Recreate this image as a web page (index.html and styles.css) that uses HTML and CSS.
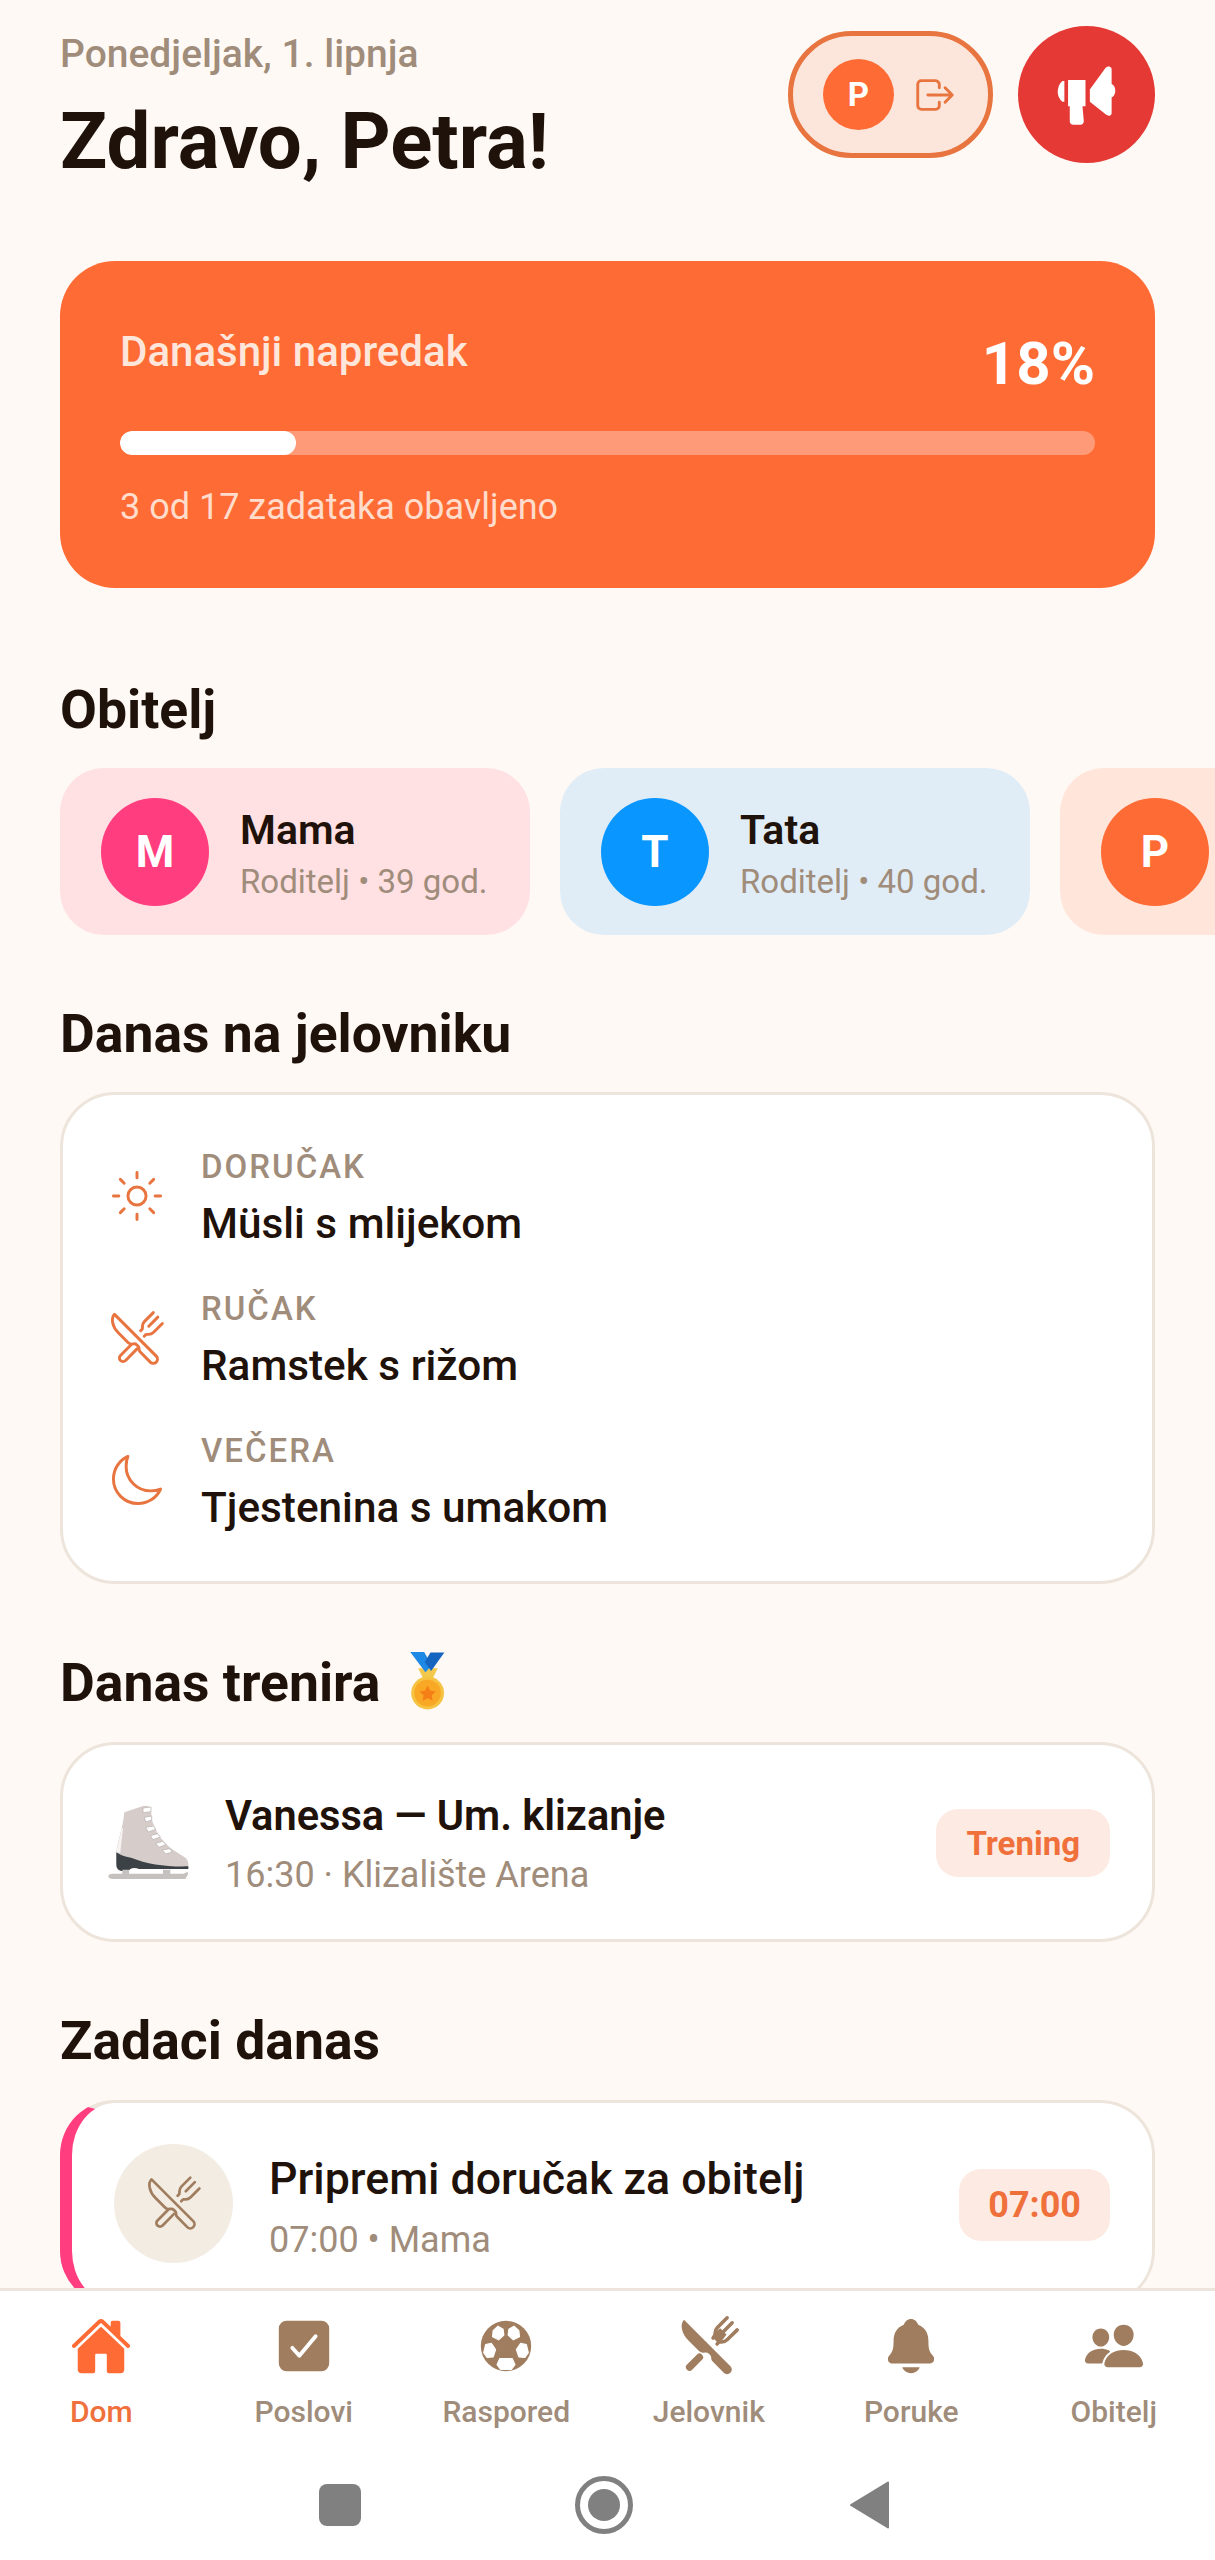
FILE: index.html
```html
<!DOCTYPE html>
<html lang="hr">
<head>
    <meta charset="UTF-8">
    <meta name="viewport" content="width=device-width, initial-scale=1.0">
    <title>Obitelj - Dom</title>
    <link rel="stylesheet" href="styles.css">
</head>
<body>

    <div class="phone">
        <div class="scroll">

            <div class="header">
                <div class="greeting">
                    <p class="date">Ponedjeljak, 1. lipnja</p>
                    <h1>Zdravo, Petra!</h1>
                </div>
                <div class="actions">
                    <div class="user-pill">
                        <span class="pill-avatar">P</span>
                        <svg class="exit-icon" viewBox="0 0 512 512"><path d="M304 336v40a40 40 0 01-40 40H104a40 40 0 01-40-40V136a40 40 0 0140-40h152c22.09 0 48 17.91 48 40v40M368 336l80-80-80-80M176 256h256"/></svg>
                    </div>
                    <div class="alert-btn">
                        <svg class="alert-icon" viewBox="880 150 200 200">
                            <path d="M914 210h-6c-9 8-14 20-14 32s5 22 14 30h6z"/>
                            <path d="M925 207h52v78h-9l4 44c0 7-4 11-10 11h-21c-7 0-11-4-11-11v-44h-5z"/>
                            <path d="M990 235l46-63c6-8 19-7 19 3v44c7 3 11 11 11 20s-4 17-11 20v46c0 9-10 11-17 5l-48-38z"/>
                        </svg>
                    </div>
                </div>
            </div>

            <div class="progress-card">
                <div class="progress-top">
                    <span class="progress-label">Današnji napredak</span>
                    <span class="progress-value">18%</span>
                </div>
                <div class="bar"><div class="bar-fill" style="width: 18%"></div></div>
                <p class="progress-note">3 od 17 zadataka obavljeno</p>
            </div>

            <h2 class="first">Obitelj</h2>
            <div class="family">
                <div class="member pink">
                    <span class="avatar">M</span>
                    <div class="member-text">
                        <p class="member-name">Mama</p>
                        <p class="member-role">Roditelj • 39 god.</p>
                    </div>
                </div>
                <div class="member blue">
                    <span class="avatar">T</span>
                    <div class="member-text">
                        <p class="member-name">Tata</p>
                        <p class="member-role">Roditelj • 40 god.</p>
                    </div>
                </div>
                <div class="member peach">
                    <span class="avatar">P</span>
                </div>
            </div>

            <h2>Danas na jelovniku</h2>
            <div class="card menu">
                <div class="meal">
                    <svg class="meal-icon" viewBox="0 0 512 512"><path d="M256 48v48M256 416v48M403.08 108.92l-33.94 33.94M142.86 369.14l-33.94 33.94M464 256h-48M96 256H48M403.08 403.08l-33.94-33.94M142.86 142.86l-33.94-33.94"/><circle cx="256" cy="256" r="80"/></svg>
                    <div>
                        <p class="meal-label">DORUČAK</p>
                        <p class="meal-name">Müsli s mlijekom</p>
                    </div>
                </div>
                <div class="meal">
                    <svg class="meal-icon" viewBox="0 0 512 512"><path d="M57.49 47.74l368.43 368.43a37.28 37.28 0 010 52.72 37.29 37.29 0 01-52.72 0l-90-91.55a32 32 0 01-9.2-22.43v-5.53a32 32 0 00-9.52-22.78l-11.62-10.73a32 32 0 00-29.8-7.44 48.53 48.53 0 01-46.56-12.63l-85.43-85.44C40.39 159.68 21.74 83.15 57.49 47.74z"/><path d="M400 32l-77.25 77.25A64 64 0 00304 154.51v14.86a16 16 0 01-4.69 11.32L288 192M320 240l11.31-11.31a16 16 0 0111.32-4.69h14.86a64 64 0 0045.26-18.75L480 128M440 72l-80 80M200 320l-89.81 89.81a32 32 0 000 45.26 32 32 0 0045.26 0L256 352"/></svg>
                    <div>
                        <p class="meal-label">RUČAK</p>
                        <p class="meal-name">Ramstek s rižom</p>
                    </div>
                </div>
                <div class="meal">
                    <svg class="meal-icon" viewBox="0 0 512 512"><path d="M160 136c0-30.62 4.51-61.61 16-88C99.57 81.27 48 159.32 48 248c0 119.29 96.71 216 216 216 88.68 0 166.73-51.57 200-128-26.39 11.49-57.38 16-88 16-119.29 0-216-96.71-216-216z"/></svg>
                    <div>
                        <p class="meal-label">VEČERA</p>
                        <p class="meal-name">Tjestenina s umakom</p>
                    </div>
                </div>
            </div>

            <h2 class="with-emoji">Danas trenira
                <svg class="medal" viewBox="1040 95 120 190">
                    <path fill="#f2c94c" d="M1072 150h62l-16 32h-30z"/>
                    <path fill="#1e88e5" d="M1047 98h44l24 42-20 22z"/>
                    <path fill="#1565c0" d="M1155 100h-44l-18 30 20 28z"/>
                    <circle fill="#f5c242" cx="1102" cy="228" r="52"/>
                    <circle fill="#f9a825" cx="1102" cy="228" r="42"/>
                    <path fill="#f57f17" d="M1102 204l8 16 18 3-13 12 3 18-16-9-16 9 3-18-13-12 18-3z"/>
                </svg>
            </h2>
            <div class="card training">
                <svg class="skate" viewBox="145 560 243 228">
                    <path fill="#d6cdcb" d="M194 585l54-18c12-4 24-1 26 10l2 22c2 28 28 74 66 100l32 20c9 6 12 14 12 24v8H212l-42-12v-30c0-30 20-74 24-124z"/>
                    <path fill="#f6f3f2" d="M186 632c-4 26-14 50-16 74h12c2-24 6-50 8-74z"/>
                    <path fill="#fff" stroke="#b5aeac" stroke-width="2" d="M250 572l24-3v14l-24 3zM254 600l22-4v12l-18 6zM258 630l24-4 6 10-22 8zM272 655l22-6 8 10-22 8zM288 678l22-6 8 10-20 8zM308 698l22-4 8 10-20 6z"/>
                    <path fill="#3c4145" d="M170 705c15 10 30 14 44 16 50 20 110 28 172 26v8H238c-10-4-18-4-26 0l-6 6h-16c-14 0-20-8-20-18z"/>
                    <path fill="#c4c1be" d="M188 757h20v12h102v-12h22v12h40l12-6 1 8-8 14H160c-8 0-14-3-14-8s5-8 12-8h30z"/>
                </svg>
                <div class="card-text training-text">
                    <p class="card-title">Vanessa — Um. klizanje</p>
                    <p class="card-sub">16:30 · Klizalište Arena</p>
                </div>
                <span class="tag">Trening</span>
            </div>

            <h2>Zadaci danas</h2>
            <div class="card task">
                <div class="task-icon">
                    <svg viewBox="0 0 512 512"><path d="M57.49 47.74l368.43 368.43a37.28 37.28 0 010 52.72 37.29 37.29 0 01-52.72 0l-90-91.55a32 32 0 01-9.2-22.43v-5.53a32 32 0 00-9.52-22.78l-11.62-10.73a32 32 0 00-29.8-7.44 48.53 48.53 0 01-46.56-12.63l-85.43-85.44C40.39 159.68 21.74 83.15 57.49 47.74z"/><path d="M400 32l-77.25 77.25A64 64 0 00304 154.51v14.86a16 16 0 01-4.69 11.32L288 192M320 240l11.31-11.31a16 16 0 0111.32-4.69h14.86a64 64 0 0045.26-18.75L480 128M440 72l-80 80M200 320l-89.81 89.81a32 32 0 000 45.26 32 32 0 0045.26 0L256 352"/></svg>
                </div>
                <div class="card-text task-text">
                    <p class="task-title">Pripremi doručak za obitelj</p>
                    <p class="card-sub task-sub">07:00 • Mama</p>
                </div>
                <span class="tag time">07:00</span>
            </div>
        </div>

        <div class="nav">
            <div class="nav-item active">
                <svg class="nav-icon" viewBox="0 0 512 512"><path d="M261.56 101.28a8 8 0 00-11.06 0L66.4 277.15a8 8 0 00-2.47 5.79L63.9 448a32 32 0 0032 32H192a16 16 0 0016-16V328a8 8 0 018-8h80a8 8 0 018 8v136a16 16 0 0016 16h96.06a32 32 0 0032-32V282.94a8 8 0 00-2.47-5.79z"/><path d="M490.91 244.15l-74.8-71.56V64a16 16 0 00-16-16h-48a16 16 0 00-16 16v32l-57.92-55.38C272.77 35.14 264.71 32 256 32c-8.68 0-16.72 3.14-22.14 8.63l-212.7 203.5c-6.22 6-7 15.87-1.34 22.37A16 16 0 0043 267.56L250.5 69.28a8 8 0 0111.06 0l207.52 198.28a16 16 0 0022.59-.44c6.14-6.36 5.63-16.86-.76-22.97z"/></svg>
                <span>Dom</span>
            </div>
            <div class="nav-item">
                <svg class="nav-icon" viewBox="0 0 512 512"><path d="M400 48H112a64.07 64.07 0 00-64 64v288a64.07 64.07 0 0064 64h288a64.07 64.07 0 0064-64V112a64.07 64.07 0 00-64-64zm-35.75 138.29l-134.4 160a16 16 0 01-12 5.71h-.27a16 16 0 01-11.89-5.3l-57.6-64a16 16 0 1123.78-21.4l45.29 50.32 122.59-145.91a16 16 0 0124.5 20.58z"/></svg>
                <span>Poslovi</span>
            </div>
            <div class="nav-item">
                <svg class="nav-icon" viewBox="0 0 512 512">
                    <circle cx="256" cy="256" r="208"/>
                    <g class="ball-patch">
                        <path d="M150 130l40-38 42 26 6 47-43 40-50-25z"/>
                        <path d="M362 130l-40-38-42 26-6 47 43 40 50-25z"/>
                        <path d="M88 245l47-10 35 50-20 60-50 5-28-40z"/>
                        <path d="M424 245l-47-10-35 50 20 60 50 5 28-40z"/>
                        <path d="M205 360h102l23 50-30 40h-88l-30-40z"/>
                    </g>
                </svg>
                <span>Raspored</span>
            </div>
            <div class="nav-item">
                <svg class="nav-icon" viewBox="10 10 492 492">
                    <path d="M57.49 47.74l368.43 368.43a37.28 37.28 0 010 52.72 37.29 37.29 0 01-52.72 0l-90-91.55a32 32 0 01-9.2-22.43v-5.53a32 32 0 00-9.52-22.78l-11.62-10.73a32 32 0 00-29.8-7.44 48.53 48.53 0 01-46.56-12.63l-85.43-85.44C40.39 159.68 21.74 83.15 57.49 47.74z"/>
                    <path d="M300 150l45-35 50 50-35 47-40 13-30-30z"/>
                    <path class="fork-line" d="M400 32l-77 77A64 64 0 00304 154v15L288 192M320 240l11-11a16 16 0 0111-5h15a64 64 0 0045-19l78-77M440 72l-90 90"/>
                    <path class="fork-handle" d="M180 345l-78 78"/>
                </svg>
                <span>Jelovnik</span>
            </div>
            <div class="nav-item">
                <svg class="nav-icon" viewBox="0 0 512 512"><path d="M440.08 341.31c-1.66-2-3.29-4-4.89-5.93-22-26.61-35.31-42.67-35.31-118 0-39-9.33-71-27.72-95-13.56-17.73-31.89-31.18-56.05-41.12a3 3 0 01-.82-.67C306.6 51.49 282.82 32 256 32s-50.59 19.49-59.28 48.56a3.13 3.13 0 01-.81.65c-56.38 23.21-83.78 67.74-83.78 136.14 0 75.36-13.29 91.42-35.31 118-1.6 1.93-3.23 3.89-4.89 5.93a35.16 35.16 0 00-4.65 37.62c6.17 13 19.32 21.07 34.33 21.07H410.5c14.94 0 28-8.06 34.19-21a35.17 35.17 0 00-4.61-37.66zM256 480a80.06 80.06 0 0070.44-42.13 4 4 0 00-3.54-5.87H189.12a4 4 0 00-3.55 5.87A80.06 80.06 0 00256 480z"/></svg>
                <span>Poruke</span>
            </div>
            <div class="nav-item">
                <svg class="nav-icon" viewBox="0 0 512 512"><path d="M336 256c-20.56 0-40.44-9.18-56-25.84-15.13-16.25-24.37-37.92-26-61-1.74-24.62 5.77-47.26 21.14-63.76S312 80 336 80c23.83 0 45.38 9.06 60.7 25.52 15.47 16.62 23 39.22 21.26 63.63-1.67 23.11-10.9 44.77-26 61C376.44 246.82 356.57 256 336 256zM467.83 432H204.18a27.71 27.71 0 01-22-10.67 30.22 30.22 0 01-5.26-25.79c8.42-33.81 29.28-61.85 60.32-81.08C264.79 297.4 299.86 288 336 288c36.85 0 71 9 98.71 26.05 31.11 19.13 52 47.33 60.38 81.55a30.27 30.27 0 01-5.32 25.78A27.68 27.68 0 01467.83 432zM147 260c-35.19 0-66.13-32.72-69-72.93-1.42-20.6 5-39.65 18-53.62 12.86-13.83 31-21.45 51-21.45s38 7.66 50.93 21.57c13.1 14.08 19.5 33.09 18 53.52-2.87 40.2-33.8 72.91-68.93 72.91zM212.66 291.45c-17.59-8.6-40.42-12.9-65.65-12.9-29.46 0-58.07 7.68-80.57 21.62-25.51 15.83-42.67 38.88-49.6 66.71a27.39 27.39 0 004.79 23.36A25.32 25.32 0 0041.72 400h111a8 8 0 007.87-6.57c.11-.63.25-1.26.41-1.88 8.48-34.06 28.35-62.84 57.71-83.82a8 8 0 00-.63-13.39c-1.57-.92-3.37-1.89-5.42-2.89z"/></svg>
                <span>Obitelj</span>
            </div>
        </div>

        <div class="sysbar">
            <span class="sys-square"></span>
            <span class="sys-home"></span>
            <svg class="sys-back" viewBox="0 0 40 48"><path d="M38 1.5v45L1 24z"/></svg>
        </div>
    </div>

</body>
</html>
```

FILE: styles.css
```css
* {
    box-sizing: border-box;
    margin: 0;
    padding: 0;
}
body {
    font-family: Roboto, "Noto Sans", sans-serif;
    background-color: #fff9f5;
    color: #1f120a;
}
.phone {
    width: 1215px;
    height: 2560px;
    display: flex;
    flex-direction: column;
    overflow: hidden;
}
.scroll {
    flex: 1;
    min-height: 0;
    overflow: hidden;
    padding: 26px 60px 0;
}

/* header */
.header {
    display: flex;
    justify-content: space-between;
    align-items: flex-start;
    height: 161px;
    margin-bottom: 74px;
}
.greeting {
    padding-top: 6px;
}
.date {
    font-size: 39px;
    line-height: 44px;
    font-weight: 500;
    color: #a08c7a;
}
h1 {
    font-size: 78px;
    line-height: 90px;
    font-weight: 700;
    margin-top: 21px;
}
.actions {
    display: flex;
    align-items: center;
    gap: 25px;
}
.user-pill {
    width: 205px;
    height: 127px;
    border: 5px solid #e8743f;
    border-radius: 64px;
    background-color: #fce6dc;
    display: flex;
    align-items: center;
    padding-left: 30px;
    gap: 18px;
}
.pill-avatar {
    width: 71px;
    height: 71px;
    border-radius: 50%;
    background-color: #ff6b35;
    color: white;
    font-size: 33px;
    font-weight: 700;
    display: flex;
    justify-content: center;
    align-items: center;
}
.exit-icon {
    width: 46px;
    height: 46px;
    fill: none;
    stroke: #e8743f;
    stroke-width: 32;
    stroke-linecap: round;
    stroke-linejoin: round;
}
.alert-btn {
    width: 137px;
    height: 137px;
    border-radius: 50%;
    background-color: #e53935;
    display: flex;
    justify-content: center;
    align-items: center;
}
.alert-icon {
    width: 67px;
    height: 67px;
    fill: white;
}

/* progress */
.progress-card {
    background-color: #ff6b35;
    border-radius: 55px;
    height: 327px;
    padding: 68px 60px 0;
    color: white;
    margin-bottom: 89px;
}
.progress-top {
    display: flex;
    justify-content: space-between;
    align-items: flex-start;
}
.progress-label {
    font-size: 42px;
    line-height: 46px;
    font-weight: 500;
    color: #ffe6da;
}
.progress-value {
    font-size: 60px;
    line-height: 66px;
    font-weight: 700;
    margin-top: 2px;
}
.bar {
    height: 24px;
    border-radius: 12px;
    background-color: #ff9a78;
    margin-top: 34px;
    overflow: hidden;
}
.bar-fill {
    height: 100%;
    border-radius: 12px;
    background-color: white;
}
.progress-note {
    font-size: 36px;
    line-height: 44px;
    color: #ffdccb;
    margin-top: 30px;
}

/* sections */
h2 {
    font-size: 53.5px;
    line-height: 66px;
    font-weight: 700;
    margin: 66px 0 26px;
}
h2.first {
    margin-top: 0;
    margin-bottom: 25px;
}
.with-emoji {
    display: flex;
    align-items: center;
    gap: 28px;
}
.medal {
    width: 38px;
    height: 60px;
    margin-top: -5px;
}
.card {
    background-color: white;
    border: 3px solid #ede5db;
    border-radius: 55px;
}

/* family */
.family {
    display: flex;
    gap: 30px;
    width: 1500px;
}
.member {
    flex: 0 0 470px;
    height: 167px;
    border-radius: 44px;
    display: flex;
    align-items: center;
    padding-left: 41px;
    gap: 31px;
}
.pink { background-color: #ffe0e3; }
.blue { background-color: #e0edf7; }
.peach { background-color: #ffe5da; }
.avatar {
    flex: none;
    width: 108px;
    height: 108px;
    border-radius: 50%;
    color: white;
    font-size: 44px;
    font-weight: 700;
    display: flex;
    justify-content: center;
    align-items: center;
}
.pink .avatar { background-color: #ff3d7f; }
.blue .avatar { background-color: #0a96ff; }
.peach .avatar { background-color: #ff6b35; }
.member-text {
    padding-top: 6px;
}
.member-name {
    font-size: 41px;
    line-height: 50px;
    font-weight: 600;
}
.member-role {
    font-size: 33px;
    line-height: 44px;
    color: #a08c7a;
    margin-top: 5px;
}

/* menu */
.menu {
    margin-top: -1px;
    padding: 52px 0 44px 45px;
    display: flex;
    flex-direction: column;
    gap: 36px;
}
.meal {
    display: flex;
    align-items: center;
    gap: 35px;
}
.meal-icon {
    width: 58px;
    height: 58px;
    margin-top: -8px;
    fill: none;
    stroke: #e8743f;
    stroke-width: 26;
    stroke-linecap: round;
    stroke-linejoin: round;
}
.meal-label {
    font-size: 33px;
    line-height: 40px;
    font-weight: 500;
    letter-spacing: 2px;
    color: #a08c7a;
}
.meal-name {
    font-size: 42.3px;
    line-height: 58px;
    font-weight: 455;
    margin-top: 8px;
}

/* training + tasks */
.training {
    height: 200px;
    display: flex;
    align-items: center;
    padding: 0 42px 0 45px;
    gap: 36px;
}
.skate {
    flex: none;
    width: 81px;
    height: 76px;
}
.card-text {
    flex: 1;
}
.training-text {
    padding-top: 4px;
}
.task-text {
    padding-top: 7px;
}
.card-title {
    font-size: 41.6px;
    line-height: 52px;
    font-weight: 600;
}
.card-sub {
    font-size: 36px;
    line-height: 46px;
    color: #a08c7a;
    margin-top: 10px;
}
.tag {
    background-color: #fdebe3;
    color: #f0703c;
    border-radius: 22px;
    height: 68px;
    padding: 0 30px;
    font-size: 33px;
    font-weight: 700;
    display: flex;
    align-items: center;
    margin-top: 2px;
}
.task {
    height: 206px;
    border-left: 12px solid #ff3d7f;
    display: flex;
    align-items: center;
    padding: 0 42px;
    gap: 36px;
}
.task-icon {
    flex: none;
    width: 119px;
    height: 119px;
    border-radius: 50%;
    background-color: #f3ece3;
    display: flex;
    justify-content: center;
    align-items: center;
}
.task-icon svg {
    width: 58px;
    height: 58px;
    fill: none;
    stroke: #a07d5e;
    stroke-width: 24;
    stroke-linecap: round;
    stroke-linejoin: round;
}
.task-title {
    font-size: 44.7px;
    line-height: 56px;
    font-weight: 500;
}
.task-sub {
    margin-top: 10px;
}
.time {
    height: 72px;
    font-size: 36px;
    padding: 0 29px;
    margin-top: 3px;
}

/* bottom nav */
.nav {
    flex: none;
    height: 162px;
    background-color: white;
    border-top: 3px solid #ede5db;
    display: grid;
    grid-template-columns: repeat(6, 1fr);
}
.nav-item {
    display: flex;
    flex-direction: column;
    align-items: center;
    padding-top: 24px;
    font-size: 30px;
    line-height: 40px;
    font-weight: 500;
    color: #a08c7a;
}
.nav-item span {
    margin-top: 15px;
}
.nav-icon {
    width: 62px;
    height: 62px;
    fill: #a07d5e;
}
.active {
    color: #f0703c;
}
.active .nav-icon {
    fill: #ff6b35;
}
.ball-patch path {
    fill: white;
    stroke: white;
    stroke-width: 10;
    stroke-linejoin: round;
}
.fork-line {
    fill: none;
    stroke: #a07d5e;
    stroke-width: 28;
    stroke-linecap: round;
    stroke-linejoin: round;
}
.fork-handle {
    fill: none;
    stroke: #a07d5e;
    stroke-width: 58;
    stroke-linecap: round;
}

/* android bar */
.sysbar {
    flex: none;
    height: 110px;
    background-color: white;
    display: flex;
    justify-content: center;
    align-items: center;
    padding-right: 6px;
}
.sys-square {
    width: 42px;
    height: 42px;
    border-radius: 8px;
    background-color: #808080;
}
.sys-home {
    width: 58px;
    height: 58px;
    border-radius: 50%;
    border: 5px solid #808080;
    margin-left: 214px;
    display: flex;
    justify-content: center;
    align-items: center;
}
.sys-home::after {
    content: "";
    width: 32px;
    height: 32px;
    border-radius: 50%;
    background-color: #808080;
}
.sys-back {
    width: 40px;
    height: 48px;
    margin-left: 217px;
    fill: #808080;
    stroke: #808080;
    stroke-width: 2;
    stroke-linejoin: round;
}
```
